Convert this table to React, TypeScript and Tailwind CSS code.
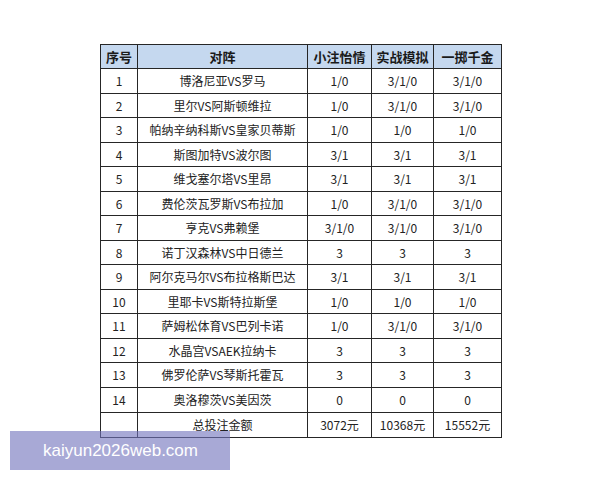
import React from "react";

const rows: [string, string, string, string, string][] = [
  ["1", "博洛尼亚VS罗马", "1/0", "3/1/0", "3/1/0"],
  ["2", "里尔VS阿斯顿维拉", "1/0", "3/1/0", "3/1/0"],
  ["3", "帕纳辛纳科斯VS皇家贝蒂斯", "1/0", "1/0", "1/0"],
  ["4", "斯图加特VS波尔图", "3/1", "3/1", "3/1"],
  ["5", "维戈塞尔塔VS里昂", "3/1", "3/1", "3/1"],
  ["6", "费伦茨瓦罗斯VS布拉加", "1/0", "3/1/0", "3/1/0"],
  ["7", "亨克VS弗赖堡", "3/1/0", "3/1/0", "3/1/0"],
  ["8", "诺丁汉森林VS中日德兰", "3", "3", "3"],
  ["9", "阿尔克马尔VS布拉格斯巴达", "3/1", "3/1", "3/1"],
  ["10", "里耶卡VS斯特拉斯堡", "1/0", "1/0", "1/0"],
  ["11", "萨姆松体育VS巴列卡诺", "1/0", "3/1/0", "3/1/0"],
  ["12", "水晶宫VSAEK拉纳卡", "3", "3", "3"],
  ["13", "佛罗伦萨VS琴斯托霍瓦", "3", "3", "3"],
  ["14", "奥洛穆茨VS美因茨", "0", "0", "0"],
  ["", "总投注金额", "3072元", "10368元", "15552元"],
];

const heights = ["h-[25px]", "h-[24px]"];

export default function App() {
  return (
    <div
      className="relative w-[600px] h-[480px] bg-white overflow-hidden"
      style={{ fontFamily: '"Noto Sans CJK SC", "Noto Sans", sans-serif' }}
    >
      <div className="pt-[44px] pl-[100px]">
        <div className="w-[402px] border-l border-t border-[#262626] text-[#1a1a1a]">
          <div className="grid grid-cols-[37px_170px_64px_62px_68px] h-[24px] bg-[#c5d8ef] text-[13px] font-bold">
            {["序号", "对阵", "小注怡情", "实战模拟", "一掷千金"].map((h) => (
              <div
                key={h}
                className="flex items-center justify-center border-r border-b border-[#262626]"
              >
                {h}
              </div>
            ))}
          </div>
          {rows.map((r, i) => (
            <div
              key={i}
              className={
                "grid grid-cols-[37px_170px_64px_62px_68px] text-[12px] " +
                (i >= 12 ? "h-[25px]" : heights[i % 2])
              }
            >
              {r.map((c, j) => (
                <div
                  key={j}
                  className="flex items-center justify-center border-r border-b border-[#262626] text-[#222222]"
                >
                  {c}
                </div>
              ))}
            </div>
          ))}
        </div>
      </div>
      <div
        className="absolute left-[10px] top-[431px] w-[220px] h-[39px] bg-[rgba(114,116,189,0.62)] flex items-center pl-[33px] text-white text-[17px]"
        style={{ fontFamily: '"Liberation Sans", Arial, sans-serif' }}
      >
        kaiyun2026web.com
      </div>
    </div>
  );
}
